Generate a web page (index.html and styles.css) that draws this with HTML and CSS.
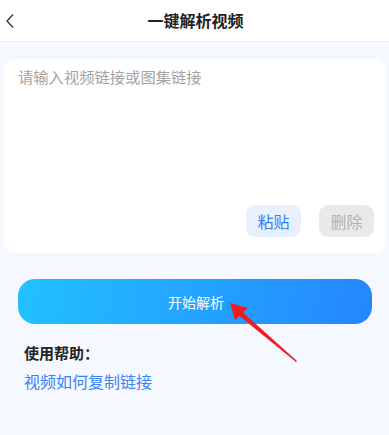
FILE: index.html
```html
<!DOCTYPE html>
<html lang="zh">
<head>
<meta charset="utf-8">
<link rel="stylesheet" href="styles.css">
</head>
<body>
<div class="page">
  <header class="topbar">
    <svg class="back" width="10" height="16" viewBox="0 0 10 16"><path d="M8 1.5 L2 8 L8 14.5" fill="none" stroke="#333" stroke-width="1.3"/></svg>
    <h1 class="title">一键解析视频</h1>
  </header>
  <main class="content">
    <section class="card">
      <div class="placeholder">请输入视频链接或图集链接</div>
      <div class="actions">
        <span class="btn paste">粘贴</span>
        <span class="btn del">删除</span>
      </div>
    </section>
    <div class="start-wrap">
      <div class="start">开始解析</div>
      <svg class="arrow" width="80" height="66" viewBox="0 0 80 66">
        <path d="M8 3 L26 8 L21 12.5 L75 61 L74 62 L17.5 16 L13 20 Z" fill="#f01c24"/>
      </svg>
    </div>
    <div class="help">
      <div class="help-title">使用帮助：</div>
      <a class="help-link">视频如何复制链接</a>
    </div>
  </main>
</div>
</body>
</html>
```
FILE: styles.css
```css
* { box-sizing: border-box; margin: 0; padding: 0; }
html, body { width: 389px; height: 435px; overflow: hidden; }
body {
  background: #f5f8fe;
  font-family: "Noto Sans CJK SC", "Noto Sans", sans-serif;
}
.page { display: flex; flex-direction: column; height: 435px; }
.topbar {
  height: 42px;
  background: #fff;
  border-bottom: 1px solid #eceff4;
  display: flex;
  align-items: center;
  justify-content: center;
  position: relative;
}
.back { position: absolute; left: 5px; top: 13px; }
.title {
  font-size: 16px;
  font-weight: 700;
  color: #222;
  letter-spacing: 0;
  line-height: 1;
  margin-top: -1px;
  padding-left: 2px;
}
.content { padding: 17px 4px 0 4px; }
.card {
  background: #fff;
  border-radius: 9px;
  height: 194px;
  padding: 6px 11px 16px 14px;
  display: flex;
  flex-direction: column;
  justify-content: space-between;
}
.placeholder {
  font-size: 15.3px;
  line-height: 22px;
  color: #a4a4a4;
}
.actions { display: flex; justify-content: flex-end; gap: 18px; }
.btn {
  width: 55px;
  height: 32px;
  border-radius: 9px;
  display: flex;
  align-items: center;
  justify-content: center;
  font-size: 16px;
}
.paste { background: #e8effd; color: #3b7ff4; }
.del { background: #e9e9e9; color: #b3b3b3; }
.start-wrap { position: relative; padding: 26px 13px 0 14px; }
.start {
  height: 45px;
  border-radius: 17px;
  background: linear-gradient(100deg, #22c1fe 0%, #2586fe 100%);
  color: #fff;
  font-size: 14px;
  display: flex;
  align-items: center;
  justify-content: center;
  padding-left: 2px;
}
.arrow { position: absolute; left: 218px; top: 47px; }
.help { padding: 18px 0 0 20px; }
.help-title {
  font-size: 15px;
  font-weight: 700;
  color: #222;
  line-height: 22px;
}
.help-link {
  display: block;
  margin-top: 6px;
  font-size: 16px;
  line-height: 22px;
  color: #3a82f5;
}
```
